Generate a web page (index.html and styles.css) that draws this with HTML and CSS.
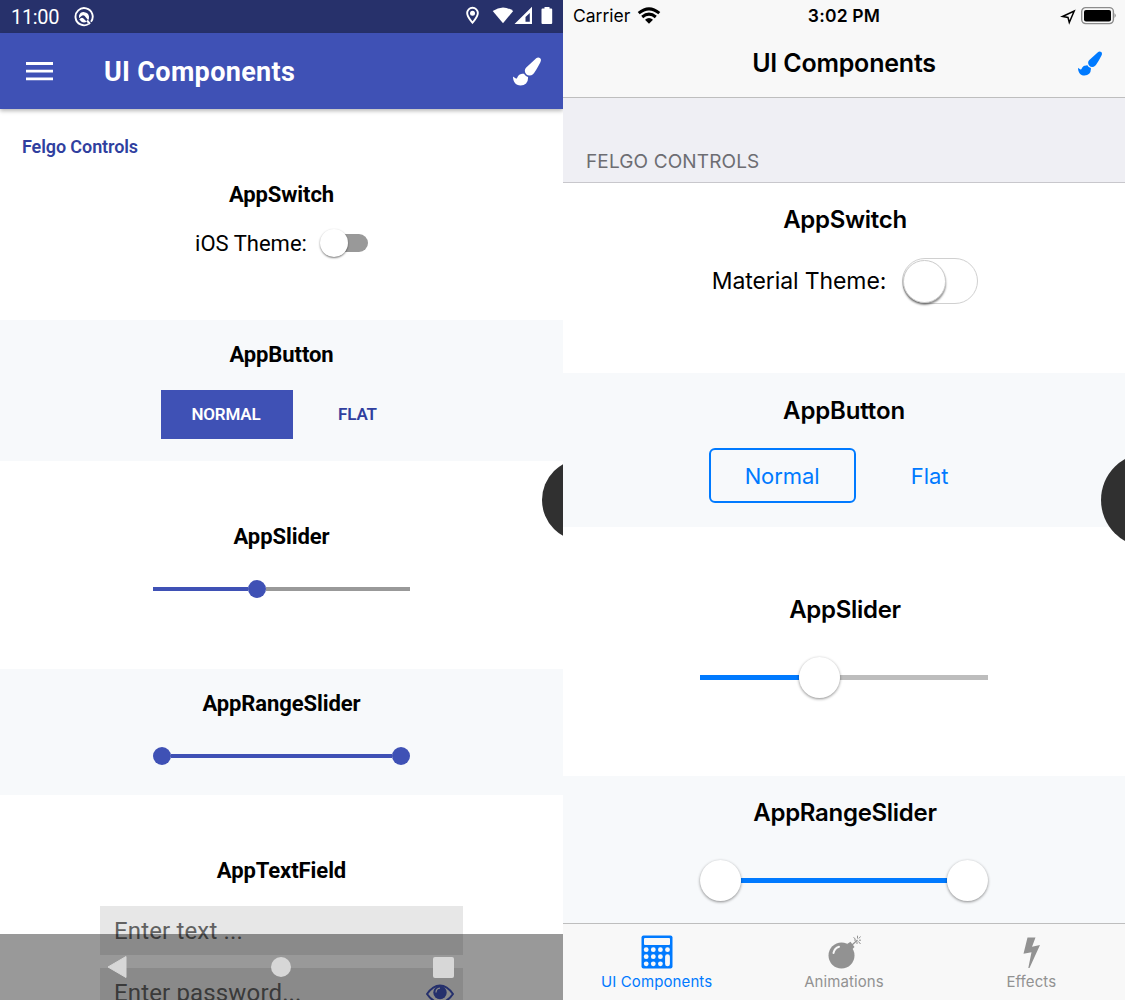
FILE: index.html
```html
<!DOCTYPE html>
<html lang="en">
<head>
<meta charset="utf-8">
<title>UI Components</title>
<link rel="stylesheet" href="styles.css">
</head>
<body>
<svg class="defs" width="0" height="0">
  <symbol id="brush" viewBox="0 0 1792 1792"><path d="M1615 0q70 0 122.5 46.5t52.5 116.5q0 63-45 151-332 629-465 752-97 91-218 91-126 0-216.5-92.5t-90.5-219.5q0-128 92-212l638-579q59-54 130-54zm-909 1034q39 76 106.5 130t150.5 76l1 71q4 213-129.5 347t-348.5 134q-123 0-218-46.5t-152.5-127.5-86.5-183-29-220q7 5 41 30t62 44.500 59 36.500 46 17q41 0 55-37 25-66 57.500-112.500t69.500-76 88-47.500 103-25.500 125-10.500z"/></symbol>
</svg>
<main class="screens">
  <section class="phone android">
    <div class="status">
      <span class="clock">11:00</span>
      <svg class="status-app" width="20" height="20" viewBox="0 0 20 20" fill="none" stroke="#fff">
        <path d="M14.600 17A8.600 8.600 0 1 1 17 14.800" stroke-width="1.900"/>
        <path d="M5 8.500A5.200 5.200 0 0 1 15 9.500Q15.300 11.500 14.200 13.200L10.500 8.800Q9 7.500 7.500 9L5 11.200Z" fill="#fff" stroke="none"/>
        <path d="M5.300 12.500Q7.500 9.500 9.500 11.500L12.700 14.700Q8.500 17 5.300 12.500Z" fill="#fff" stroke="none"/>
        <path d="M13 13.500L16 17" stroke-width="2"/>
      </svg>
      <svg class="status-icons" width="90" height="20" viewBox="0 0 90 20" fill="#fff">
        <path d="M8.500 .8a6.300 6.300 0 0 0-6.300 6.300c0 4.600 6.300 11.100 6.300 11.100s6.300-6.500 6.300-11.100a6.300 6.300 0 0 0-6.300-6.300zM8.500 2.700a4.400 4.400 0 0 1 4.400 4.400c0 2.400-2.400 5.800-4.400 8.200-2-2.400-4.400-5.800-4.400-8.200a4.400 4.400 0 0 1 4.400-4.400z" fill-rule="evenodd"/><circle cx="8.500" cy="7.300" r="2.500"/>
        <path d="M28.700 5Q39 -2 49.200 5L39 17.200Z"/>
        <path d="M68 .7V18H50.500ZM65.800 7L61.500 11V15.700H65.800Z" fill-rule="evenodd"/>
        <path d="M78.500 2.500h2V1h5v1.500h1.700q1 0 1 1v13.500q0 1-1 1h-8.700q-1 0-1-1V3.500q0-1 1-1z"/>
      </svg>
    </div>
    <header class="appbar">
      <svg class="menu" width="28" height="20" viewBox="0 0 28 20"><path d="M0 2.500H27M0 10.200H27M0 17.800H27" stroke="#fff" stroke-width="2.800"/></svg>
      <h1 class="appbar-title">UI Components</h1>
      <svg class="brush" width="28" height="29" preserveAspectRatio="none"><use href="#brush"/></svg>
    </header>
    <div class="content">
      <section class="block a-switch">
        <div class="subheader">Felgo Controls</div>
        <h2 class="title">AppSwitch</h2>
        <div class="switch-row"><span class="label">iOS Theme:</span><span class="switch"><i class="knob"></i></span></div>
      </section>
      <section class="block shade a-button">
        <h2 class="title">AppButton</h2>
        <div class="buttons"><span class="btn normal">NORMAL</span><span class="btn flat">FLAT</span></div>
      </section>
      <section class="block a-slider">
        <h2 class="title">AppSlider</h2>
        <div class="slider"><i class="fill"></i><i class="dot"></i><i class="rest"></i></div>
      </section>
      <section class="block shade a-range">
        <h2 class="title">AppRangeSlider</h2>
        <div class="slider"><i class="dot"></i><i class="grow"></i><i class="dot"></i></div>
      </section>
      <section class="block a-text">
        <h2 class="title">AppTextField</h2>
        <div class="field">Enter text ...</div>
        <div class="field"><span>Enter password...</span>
          <svg class="eye" width="28" height="20" viewBox="0 0 28 20"><path d="M1 10Q7 1.500 14 1.500T27 10Q21 18.500 14 18.500T1 10Z" fill="none" stroke="#3f51b5" stroke-width="2"/><circle cx="14" cy="8.500" r="6.700" fill="#3f51b5"/><path d="M10 8.500Q10 4.500 14 4.200" fill="none" stroke="#e7e7e7" stroke-width="1.200"/></svg>
        </div>
      </section>
    </div>
    <div class="bubble"></div>
    <nav class="sysnav">
      <svg width="20" height="24" viewBox="0 0 20 24"><path d="M1 12L19 1.500V22.500Z" fill="#d7d7d7" stroke="#d7d7d7" stroke-linejoin="round"/></svg>
      <i class="home"></i>
      <i class="recent"></i>
    </nav>
  </section>
  <section class="phone ios">
    <header class="navbar">
      <div class="ios-status">
        <span class="carrier">Carrier</span>
        <svg class="wifi" width="24" height="18" viewBox="0 0 24 18" fill="none" stroke="#000" stroke-width="3"><path d="M1.700 6.200Q12 -2.500 22.300 6.200M5.200 10Q12 4.300 18.800 10"/><path d="M8 12.700Q12 9.500 16 12.700L12 16.700Z" fill="#000" stroke="none"/></svg>
        <span class="time">3:02 PM</span>
        <svg class="battery" width="58" height="20" viewBox="0 0 58 20"><path d="M4.500 10.500L16.200 5 11.300 16.500 10 11.500Z" fill="none" stroke="#000" stroke-width="1.500"/><rect x="23.700" y="1.600" width="31.700" height="16" rx="4" fill="none" stroke="#8c8c8c" stroke-width="1.400"/><rect x="26" y="4" width="27" height="11.500" rx="2" fill="#000"/><path d="M56.500 7Q59 9.500 56.500 12Z" fill="#8c8c8c"/></svg>
      </div>
      <div class="navrow"><h1 class="nav-title">UI Components</h1><svg class="brush" width="24" height="25" preserveAspectRatio="none"><use href="#brush"/></svg></div>
    </header>
    <div class="group">FELGO CONTROLS</div>
    <section class="block i-switch">
      <h2 class="title">AppSwitch</h2>
      <div class="switch-row"><span class="label">Material Theme:</span><span class="switch"><i class="knob"></i></span></div>
    </section>
    <section class="block shade i-button">
      <h2 class="title">AppButton</h2>
      <div class="buttons"><span class="btn normal">Normal</span><span class="btn flat">Flat</span></div>
    </section>
    <section class="block i-slider">
      <h2 class="title">AppSlider</h2>
      <div class="slider"><i class="fill"></i><i class="dot"></i><i class="rest"></i></div>
    </section>
    <section class="block shade i-range">
      <h2 class="title">AppRangeSlider</h2>
      <div class="slider"><i class="dot"></i><i class="grow"></i><i class="dot"></i></div>
    </section>
    <nav class="tabs">
      <div class="tab active">
        <svg width="32" height="34" viewBox="0 0 32 34"><rect x=".5" y=".5" width="31" height="33" rx="2" fill="#007aff"/><g fill="#f8f8f8"><rect x="3" y="3" width="26" height="7" rx="1"/><circle cx="5.200" cy="14.700" r="2.400"/><circle cx="12.300" cy="14.700" r="2.400"/><circle cx="19.400" cy="14.700" r="2.400"/><circle cx="26.500" cy="14.700" r="2.400"/><circle cx="5.200" cy="21.700" r="2.400"/><circle cx="12.300" cy="21.700" r="2.400"/><circle cx="19.400" cy="21.700" r="2.400"/><circle cx="5.200" cy="28.800" r="2.400"/><circle cx="12.300" cy="28.800" r="2.400"/><circle cx="19.400" cy="28.800" r="2.400"/><rect x="24.100" y="19.300" width="4.800" height="12" rx="2.400"/></g></svg>
        <span>UI Components</span>
      </div>
      <div class="tab">
        <svg width="34" height="34" viewBox="0 0 34 34"><circle cx="14.500" cy="20.500" r="13" fill="#929292"/><path d="M20 9L23.500 6.800 27.500 12 24.500 15Z" fill="#929292"/><path d="M6.500 18Q7.500 13 12 11.700" fill="none" stroke="#f8f8f8" stroke-width="2" stroke-linecap="round"/><path d="M25 10L30.500 5" stroke="#929292" stroke-width="1.200"/><path d="M26.500 2.500L28.500 4M30.500 .7V3.500M33.500 1.500L31.800 3.500M32 5.200H34M31.500 6.500L33.500 9M30 6.500V9M27 5H29" stroke="#929292"/></svg>
        <span>Animations</span>
      </div>
      <div class="tab">
        <svg width="20" height="34" viewBox="0 0 20 34"><path d="M6.500 2.500H14.500L11 11.800 19 10 8.500 33H7.300L10.500 17.200 2.500 18.700Z" fill="#929292"/></svg>
        <span>Effects</span>
      </div>
    </nav>
    <div class="bubble"></div>
  </section>
</main>
</body>
</html>
```
FILE: styles.css
```css
* { box-sizing: border-box; }
body { margin: 0; background: #fff; }
h1, h2 { margin: 0; }
svg { display: block; flex: none; }
i { display: block; flex: none; }
.defs { position: absolute; }

.screens { display: flex; width: 1125px; height: 1000px; overflow: hidden; }
.phone { position: relative; height: 1000px; overflow: hidden; display: flex; flex-direction: column; color: #000; background: #fff; white-space: nowrap; }
.block { flex: none; display: flex; flex-direction: column; align-items: center; }
.shade { background: #f7f9fb; }
.switch-row, .buttons, .slider { display: flex; align-items: center; }
.bubble { position: absolute; background: #303030; border-radius: 50%; }

/* Material screen */
.android { width: 563px; font-family: Roboto, sans-serif; }
.status { flex: none; display: flex; align-items: center; height: 33px; padding: 0 9px 0 11px; background: #27316b; color: #fff; }
.clock { font-size: 20px; width: 63px; line-height: 34px; letter-spacing: -.35px; }
.status-icons { margin-left: auto; margin-top: -2px; }
.appbar { flex: none; display: flex; align-items: center; height: 76px; padding: 0 22px 0 26px; background: #3f51b5; color: #fff; box-shadow: 0 2px 4px rgba(0,0,0,.28); z-index: 1; }
.appbar-title { margin-left: 50px; font-size: 27px; font-weight: 700; line-height: 36px; padding-top: 1px; letter-spacing: .32px; }
.appbar .brush { margin-left: auto; fill: #fff; }
.content { flex: none; }
.android .title { font-size: 22px; line-height: 26px; font-weight: 700; letter-spacing: -.08px; }
.a-switch { height: 211px; padding-top: 27px; }
.subheader { align-self: flex-start; margin-left: 22px; color: #303f9f; font-size: 18px; font-weight: 600; line-height: 22px; letter-spacing: -.1px; }
.a-switch .title { margin-top: 24px; }
.a-switch .switch-row { height: 30px; margin-top: 20px; gap: 15px; }
.label { font-size: 22px; line-height: 30px; }
.a-switch .label { padding-top: 1px; }
.android .switch { display: flex; align-items: center; width: 46px; height: 18px; border-radius: 9px; background: #999; }
.android .knob { width: 28px; height: 28px; margin-left: -2px; border-radius: 50%; background: #fff; box-shadow: 0 1px 2px rgba(0,0,0,.5); }
.a-button { height: 141px; padding-top: 22px; }
.android .buttons { width: 241px; margin: 22px 0 0 0; }
.android .btn { width: 132px; height: 49px; line-height: 49px; text-align: center; font-size: 17px; font-weight: 600; color: #303f9f; letter-spacing: -.15px; }
.android .normal { padding-right: 2px; background: #3f51b5; color: #fff; }
.android .flat { flex: 1; margin-left: 20px; }
.a-slider { height: 208px; padding-top: 63px; }
.android .slider { width: 257px; height: 18px; margin-top: 30px; }
.android .dot { width: 18px; height: 18px; border-radius: 50%; background: #3f51b5; }
.android .fill { width: 95px; height: 4px; background: #3f51b5; }
.android .rest { flex: 1; height: 4px; background: #999; }
.android .grow { flex: 1; height: 4px; background: #3f51b5; }
.a-range { height: 126px; padding-top: 22px; }
.a-text { padding-top: 63px; }
.field { display: flex; align-items: center; justify-content: space-between; width: 363px; height: 49px; margin-bottom: 13px; padding: 0 9px 0 14px; background: #e7e7e7; color: #616161; font-size: 24px; line-height: 48px; letter-spacing: .15px; }
.a-text .title { margin-bottom: 22px; }
.eye { margin-top: 2px; }
.android .bubble { left: 542px; top: 459px; width: 82px; height: 82px; }
.sysnav { position: absolute; left: 0; right: 0; bottom: 0; height: 66px; padding: 0 109px 0 107px; display: flex; align-items: center; justify-content: space-between; background: rgba(0,0,0,.4); }
.home { width: 20px; height: 20px; margin-left: 2px; border-radius: 50%; background: #d7d7d7; }
.recent { width: 21px; height: 21px; border-radius: 2px; background: #d7d7d7; }

/* iOS screen */
.ios { width: 562px; font-family: Inter, sans-serif; }
.navbar { flex: none; height: 98px; background: #f8f8f8; border-bottom: 1px solid #bebebe; }
.ios-status { display: grid; grid-template-columns: 58px 1fr 74px 235px; align-items: center; height: 31px; padding: 0 9px 0 10px; font-size: 17.500px; line-height: 31px; }
.wifi { margin-left: 6px; }
.battery { justify-self: end; }
.time { font-weight: 600; text-align: center; letter-spacing: .2px; }
.navrow { display: grid; grid-template-columns: 24px 1fr 24px; align-items: center; height: 65px; padding: 0 23px; }
.nav-title { grid-column: 2; margin-top: -2px; text-align: center; font-size: 25px; font-weight: 600; line-height: 34px; letter-spacing: -.2px; }
.navbar .brush { fill: #007aff; }
.group { flex: none; height: 85px; padding: 51px 23px 0; background: #efeff4; border-bottom: 1px solid #c8c7cc; color: #6d6d72; font-size: 19px; line-height: 26px; letter-spacing: .13px; }
.ios .title { padding-left: 2px; font-size: 24px; font-weight: 600; line-height: 30px; letter-spacing: -.3px; }
.i-switch { height: 190px; padding-top: 22px; }
.ios .switch-row { height: 46px; margin-top: 23px; padding-left: 2px; gap: 16px; }
.ios .label { font-size: 23px; letter-spacing: -.1px; }
.ios .switch { display: flex; align-items: center; width: 76px; height: 46px; border: 1.500px solid #d0d0d0; border-radius: 23px; }
.ios .switch .knob { width: 43px; height: 43px; border: 1px solid #ccc; border-radius: 50%; background: #fff; box-shadow: 0 2px 2px rgba(0,0,0,.45); }
.i-button { height: 154px; padding-top: 23px; }
.ios .i-button .title { padding-left: 0; letter-spacing: -.15px; }
.ios .buttons { width: 271px; margin: 22px 0 0; }
.ios .btn { width: 147px; height: 55px; line-height: 57px; text-align: center; font-size: 22px; color: #007aff; letter-spacing: -.1px; }
.ios .normal { border: 2px solid #007aff; border-radius: 6px; line-height: 53px; }
.ios .flat { flex: 1; margin-left: 24px; }
.i-slider { height: 249px; padding-top: 68px; }
.ios .slider { width: 288px; height: 42px; margin-top: 31px; }
.ios .dot { width: 41px; height: 41px; border-radius: 50%; background: #fff; box-shadow: 0 1px 3px rgba(0,0,0,.45); z-index: 1; }
.ios .fill { width: 99px; height: 5px; background: #007aff; }
.ios .rest { flex: 1; height: 5px; background: #bdbdbd; }
.ios .grow { flex: 1; height: 5px; background: #007aff; }
.i-range { height: 147px; padding-top: 22px; }
.tabs { flex: none; display: grid; grid-template-columns: repeat(3, 1fr); height: 77px; background: #f8f8f8; border-top: 1px solid #bebebe; }
.tab { display: flex; flex-direction: column; align-items: center; padding-top: 11px; color: #929292; font-size: 15px; line-height: 22px; letter-spacing: .1px; }
.tab span { margin-top: 2px; }
.tab.active { color: #007aff; }
.ios .bubble { left: 538px; top: 453px; width: 94px; height: 94px; }
```
